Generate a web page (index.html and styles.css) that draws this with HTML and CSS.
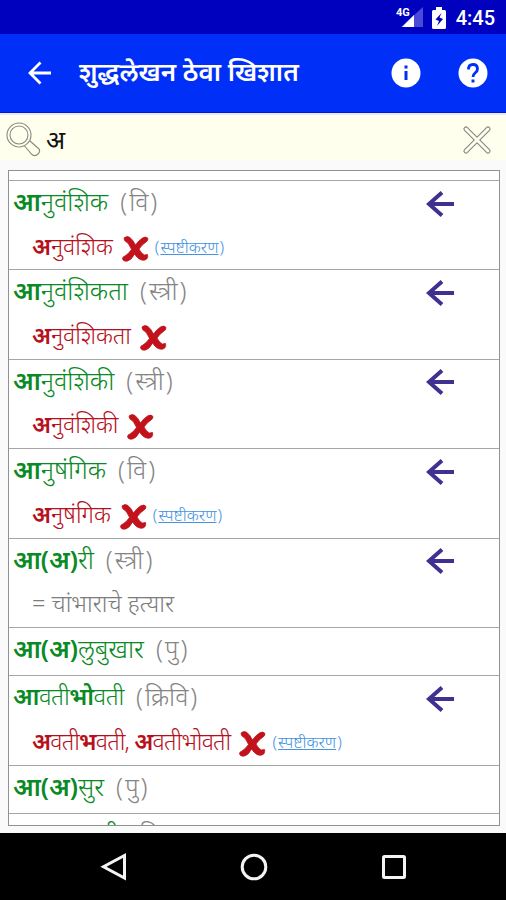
FILE: index.html
```
<!DOCTYPE html>
<html lang="mr">
<head>
<meta charset="utf-8">
<title>शुद्धलेखन ठेवा खिशात</title>
<link rel="stylesheet" href="styles.css">
</head>
<body>
<svg class="defs" width="0" height="0">
  <symbol id="cross" viewBox="0 0 27 26"><path d="M2 2Q5-.5 8 1.500Q11 4 13.500 9Q16.500 4.500 20.500 2Q24 0 26 2.500Q26 5 24 6Q20 8.500 17 13Q19.500 18 22.500 19L25.500 18.500Q26.500 22.500 23 24Q17.500 25.500 12.500 18Q9.500 24 5.500 25Q1.500 26 .5 23Q.5 20.500 3 20Q6.500 18 9.500 13.500Q6.500 7 4.500 6Q2 5 2 2Z" fill="#c2121c" stroke="#c2121c" stroke-width=".8"/></symbol>
  <symbol id="arrow" viewBox="0 0 28 26"><path d="M28 13H3M16 1.500L3 13L16 24.500" fill="none" stroke="#403090" stroke-width="4"/></symbol>
</svg>
<div class="screen">
  <div class="status">
    <svg class="signal" width="28" height="24" viewBox="0 0 28 24"><path d="M27 1V21H5Z" fill="#4a4ad8"/><path d="M18 9V21H6Z" fill="#fff"/><text x="0" y="10" class="net">4G</text></svg>
    <svg class="battery" width="14" height="22" viewBox="0 0 14 22"><path d="M4 0H10V3H12.500Q14 3 14 4.500V20.500Q14 22 12.500 22H1.500Q0 22 0 20.500V4.500Q0 3 1.500 3H4Z" fill="#fff"/><path d="M9.500 6L3.500 12.500L7 14L5 19L11 12L7.500 10.500Z" fill="#0000bf"/></svg>
    <span class="clock">4:45</span>
  </div>
  <header class="bar">
    <svg class="back" width="24" height="24" viewBox="0 0 24 24"><path d="M23 12H2M12.500 1.500L2 12L12.500 22.500" fill="none" stroke="#fff" stroke-width="2.800"/></svg>
    <h1 class="title">शुद्धलेखन ठेवा खिशात</h1>
    <svg class="info" width="30" height="30" viewBox="0 0 30 30"><circle cx="15" cy="15" r="14.500" fill="#fff"/><path d="M13.500 7.500h3v3h-3zM13.500 13h3v9h-3z" fill="#0030f8"/></svg>
    <svg class="help" width="30" height="30" viewBox="0 0 30 30"><circle cx="15" cy="15" r="14.500" fill="#fff"/><path d="M10.500 11.500Q10.500 6.500 15 6.500T19.500 11Q19.500 13 17.500 14.500Q15 16.500 15 19" fill="none" stroke="#0030f8" stroke-width="2.800"/><path d="M13.500 21.500h3v3h-3z" fill="#0030f8"/></svg>
  </header>
  <div class="search">
    <svg width="35" height="35" viewBox="0 0 35 35" fill="none" stroke="#8a8a84" stroke-width="1.100"><circle cx="13" cy="13" r="12"/><circle cx="13" cy="13" r="9"/><path d="M18.500 24L26 32.500Q29 35 32 32T32.500 26.500L24 19"/></svg>
    <span class="query">अ</span>
    <svg class="clear" width="30" height="30" viewBox="0 0 30 30"><path d="M4 4L26 26M26 4L4 26" stroke="#858585" stroke-width="5.200" stroke-linecap="round"/><path d="M4 4L26 26M26 4L4 26" stroke="#ffffee" stroke-width="3" stroke-linecap="round"/></svg>
  </div>
  <main class="list">
    <div class="strip"></div>
    <section class="row">
      <div class="head"><span class="word"><b>आ</b>नुवंशिक</span><span class="tag"><i>(</i>वि<i>)</i></span><svg class="arrow"><use href="#arrow"/></svg></div>
      <div class="sub"><span class="wrong"><b>अ</b>नुवंशिक</span><svg class="cross"><use href="#cross"/></svg><span class="note"><i>(</i><u>स्पष्टीकरण</u><i>)</i></span></div>
    </section>
    <section class="row">
      <div class="head"><span class="word"><b>आ</b>नुवंशिकता</span><span class="tag"><i>(</i>स्त्री<i>)</i></span><svg class="arrow"><use href="#arrow"/></svg></div>
      <div class="sub"><span class="wrong"><b>अ</b>नुवंशिकता</span><svg class="cross"><use href="#cross"/></svg></div>
    </section>
    <section class="row">
      <div class="head"><span class="word"><b>आ</b>नुवंशिकी</span><span class="tag"><i>(</i>स्त्री<i>)</i></span><svg class="arrow"><use href="#arrow"/></svg></div>
      <div class="sub"><span class="wrong"><b>अ</b>नुवंशिकी</span><svg class="cross"><use href="#cross"/></svg></div>
    </section>
    <section class="row">
      <div class="head"><span class="word"><b>आ</b>नुषंगिक</span><span class="tag"><i>(</i>वि<i>)</i></span><svg class="arrow"><use href="#arrow"/></svg></div>
      <div class="sub"><span class="wrong"><b>अ</b>नुषंगिक</span><svg class="cross"><use href="#cross"/></svg><span class="note"><i>(</i><u>स्पष्टीकरण</u><i>)</i></span></div>
    </section>
    <section class="row">
      <div class="head"><span class="word"><b>आ(अ)</b>री</span><span class="tag"><i>(</i>स्त्री<i>)</i></span><svg class="arrow"><use href="#arrow"/></svg></div>
      <div class="sub"><span class="meaning">= चांभाराचे हत्यार</span></div>
    </section>
    <section class="row short">
      <div class="head"><span class="word"><b>आ(अ)</b>लुबुखार</span><span class="tag"><i>(</i>पु<i>)</i></span></div>
    </section>
    <section class="row">
      <div class="head"><span class="word tight"><b>आ</b>वती<b>भो</b>वती</span><span class="tag"><i>(</i>क्रिवि<i>)</i></span><svg class="arrow"><use href="#arrow"/></svg></div>
      <div class="sub"><span class="wrong tight"><b>अ</b>वती<b>भ</b>वती, <b>अ</b>वतीभोवती</span><svg class="cross"><use href="#cross"/></svg><span class="note"><i>(</i><u>स्पष्टीकरण</u><i>)</i></span></div>
    </section>
    <section class="row short">
      <div class="head"><span class="word"><b>आ(अ)</b>सुर</span><span class="tag"><i>(</i>पु<i>)</i></span></div>
    </section>
    <section class="row short">
      <div class="head"><span class="word"><b>आ(अ)</b>ळशी</span><span class="tag"><i>(</i>वि<i>)</i></span></div>
    </section>
  </main>
  <nav class="nav">
    <svg width="28" height="28" viewBox="0 0 28 28"><path d="M24.500 2.500V25L3.500 13.700Z"/></svg>
    <svg width="28" height="28" viewBox="0 0 28 28"><circle cx="14" cy="14" r="11.800"/></svg>
    <svg width="28" height="28" viewBox="0 0 28 28"><rect x="3.500" y="3.500" width="21" height="21" rx="1"/></svg>
  </nav>
</div>
</body>
</html>
```
FILE: styles.css
```
* { box-sizing: border-box; }
body { margin: 0; font-family: "Noto Sans", "Noto Sans Devanagari", sans-serif; }
.defs { position: absolute; }
.screen { width: 506px; height: 900px; display: flex; flex-direction: column; background: #fafafa; overflow: hidden; }
.status { height: 34px; flex: none; background: #0000bf; display: flex; align-items: center; justify-content: flex-end; padding: 2px 11px 0 0; color: #fff; }
.signal { margin-right: 8px; }
.net { font: 700 11px Roboto, sans-serif; fill: #fff; }
.battery { margin-right: 10px; }
.clock { font: 500 20px Roboto, sans-serif; }
.bar { height: 79px; flex: none; background: #0030f8; border-bottom: 1px solid #0018d8; display: flex; align-items: center; padding: 0 18px 0 28px; }
.title { margin: 0 0 5px 27px; font-size: 26px; font-weight: 600; line-height: 40px; color: #fff; white-space: nowrap; flex: 1; }
.info { margin-right: 37px; }
.search { height: 47px; flex: none; background: #ffffee; border-top: 2px solid #e9e9ee; display: flex; align-items: center; padding: 4px 14px 0 6px; }
.query { margin: 0 0 2px 5px; font-size: 25px; line-height: 40px; color: #111; flex: 1; }
.list { margin: 10px 6px 7px 8px; height: 656px; flex: none; background: #fff; border: 1px solid #8f9290; overflow: hidden; }
.strip { height: 9px; }
.row { height: 89.400px; border-top: 1px solid #a5a7a5; padding-left: 4px; white-space: nowrap; }
.short { height: 48.500px; }
i { font-style: normal; }
b { font-weight: 600; }
.head { height: 43px; display: flex; align-items: center; font-size: 25px; line-height: 40px; padding-bottom: 3px; }
.word { color: #0a8a25; font-weight: 300; font-size: 25.300px; }
.word.tight { font-size: 24px; letter-spacing: -.5px; }
.tag { color: #858585; margin-left: 12px; font-weight: 300; }
.tag i:first-child { margin-right: 2px; }
.tag i:last-child { margin-left: 2px; }
.arrow { width: 28px; height: 26px; margin: 5px 45px 0 auto; }
.sub { height: 45px; display: flex; align-items: center; padding: 0 0 2px 19px; font-size: 23.200px; line-height: 42px; }
.wrong { color: #b5101c; font-weight: 300; }
.wrong.tight { letter-spacing: -.75px; }
.cross { width: 27px; height: 26px; margin: 6px 6px 0 9px; }
.note { color: #4593df; font-size: 16.500px; font-weight: 300; margin-top: 2px; }
.note i:first-child { margin-right: 1px; }
.note i:last-child { margin-left: 1px; }
.meaning { color: #7c7c7c; font-weight: 300; font-size: 23.500px; }
.nav { height: 67px; flex: none; background: #000; display: flex; justify-content: center; align-items: center; gap: 112px; padding-left: 1px; }
.nav svg { fill: none; stroke: #f4f4f4; stroke-width: 3; }
```
